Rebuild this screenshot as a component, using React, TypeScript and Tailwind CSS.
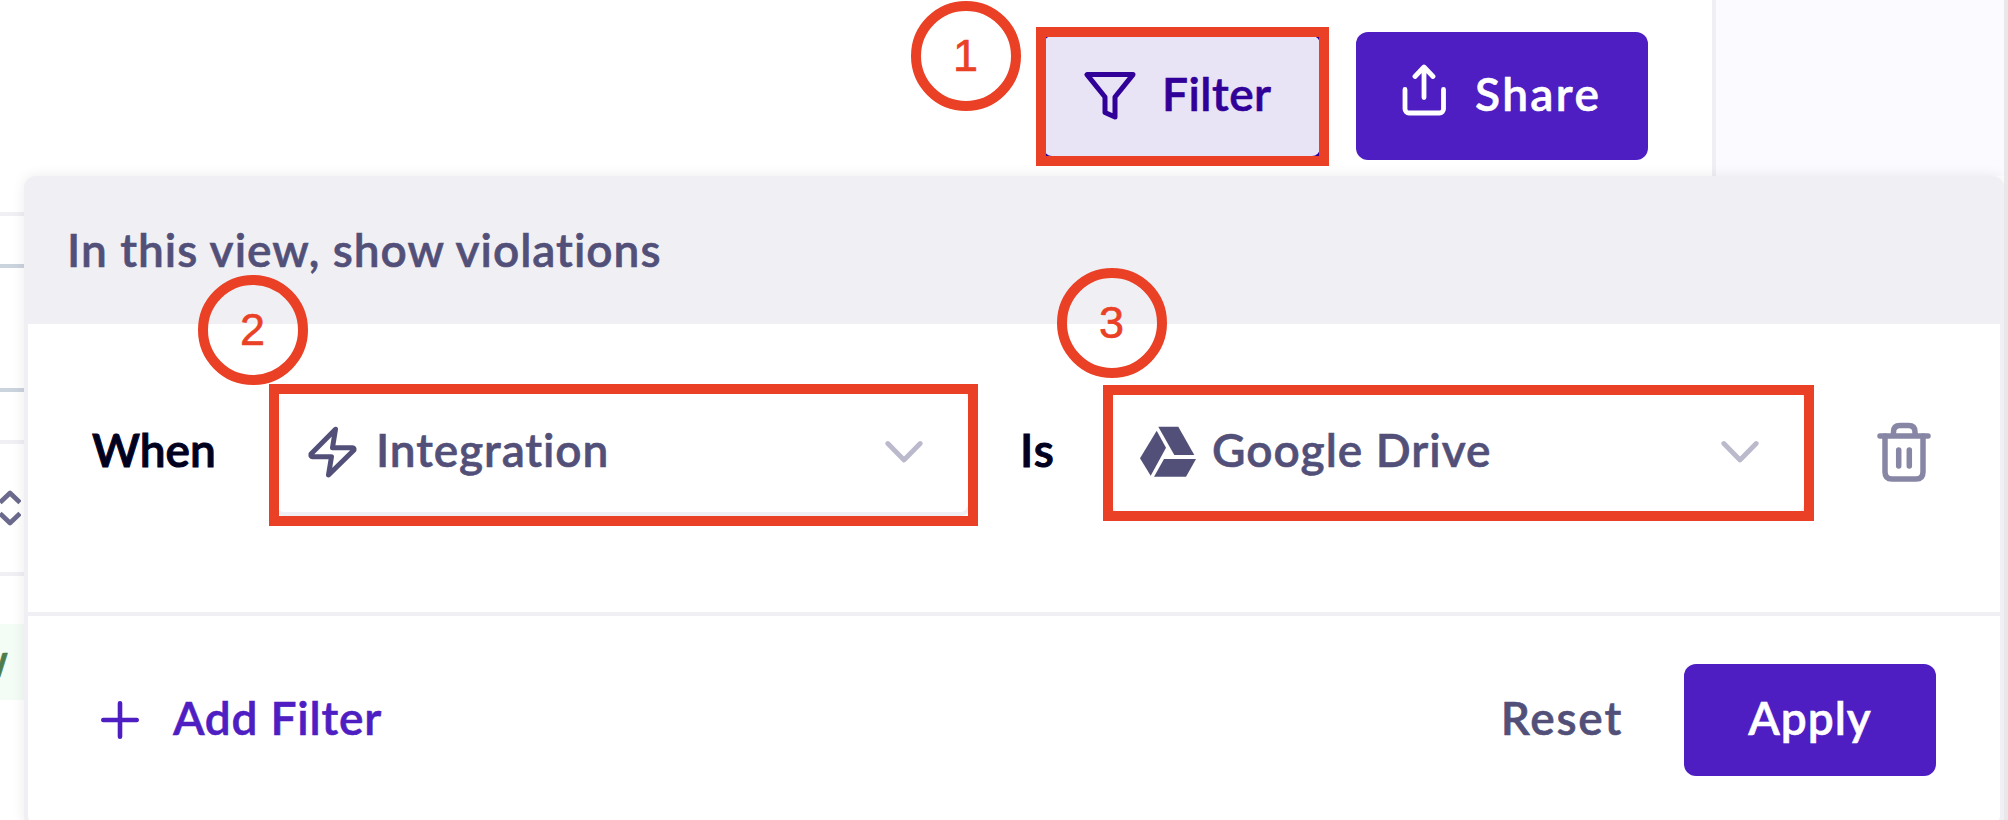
import type { ReactNode } from "react";

function FunnelIcon() {
  return (
    <svg width="52" height="48" viewBox="0 0 52 48" fill="none" stroke="currentColor" strokeWidth="5" strokeLinejoin="round">
      <path d="M3 2.6H49L31 25V45L21 40.5V25Z" />
    </svg>
  );
}

function ShareIcon() {
  return (
    <svg width="44" height="52" viewBox="0 0 44 52" fill="none" stroke="currentColor" strokeWidth="4.8" strokeLinecap="round" strokeLinejoin="round">
      <path d="M3 25.5V45a4 4 0 0 0 4 4H37.500a4 4 0 0 0 4-4V25.5" />
      <path d="M22 33.500V3.500M13 12.500L22 3L31 12.500" />
    </svg>
  );
}

function BoltIcon() {
  return (
    <svg width="49" height="53" viewBox="0 0 49 53" fill="none" stroke="currentColor" strokeWidth="5" strokeLinejoin="round">
      <path d="M27.500 3.300L3 28Q2.500 30.700 4.500 30.700H23.500L20.500 49L46 24Q46.500 21.700 44.500 21.700H24.500Z" />
    </svg>
  );
}

function DriveIcon() {
  return (
    <svg width="56" height="52" viewBox="0 0 56 52" fill="currentColor">
      <path d="M16.700 4.700L26 21.700L10.700 49.700L0 32.300Z" />
      <path d="M18.300 .7H38.300L54.300 29H34.300Z" />
      <path d="M24 33H56L46 50.700H14Z" />
    </svg>
  );
}

function ChevronIcon() {
  return (
    <svg className="text-[#bbb9cc]" width="38" height="24" viewBox="0 0 38 24" fill="none" stroke="currentColor" strokeWidth="4.8" strokeLinecap="round" strokeLinejoin="round">
      <path d="M2.800 3.500L19 20L35.200 3.500" />
    </svg>
  );
}

function TrashIcon() {
  return (
    <svg width="54" height="60" viewBox="0 0 54 60" fill="none" stroke="currentColor" strokeWidth="5.500" strokeLinecap="round" strokeLinejoin="round">
      <path d="M3 14H51" />
      <path d="M16.500 13V10Q16.500 3.600 23 3.600H31.500Q38 3.600 38 10V13" />
      <path d="M8 14V50Q8 57 15 57H39Q46 57 46 50V14" />
      <path d="M21.700 28V44M32.300 28V44" />
    </svg>
  );
}

function PlusIcon() {
  return (
    <svg width="38" height="38" viewBox="0 0 38 38" stroke="currentColor" strokeWidth="4.600" strokeLinecap="round">
      <path d="M19 2.300V35.700M2.300 19H35.700" />
    </svg>
  );
}

function SortIcon() {
  return (
    <svg className="text-[#6b698c]" width="21" height="36" viewBox="0 0 21 36" fill="none" stroke="currentColor" strokeWidth="4.800" strokeLinejoin="round">
      <path d="M0 12.500L10 3L20 12.500M0 23.500L10 33L20 23.500" />
    </svg>
  );
}

function Select({ icon, iconClass, label, labelClass }: { icon: ReactNode; iconClass: string; label: string; labelClass: string }) {
  return (
    <div className="flex h-32 w-[700px] items-center rounded-xl border-4 border-[#f0eff4] bg-white pr-[45px] text-[#525079]">
      <span className={iconClass}>{icon}</span>
      <span className={`pb-1 ${labelClass}`}>{label}</span>
      <span className="ml-auto"><ChevronIcon /></span>
    </div>
  );
}

function Step({ n, className }: { n: number; className: string }) {
  return (
    <div className={`absolute flex size-[110px] items-center justify-center rounded-full border-[10px] border-[#ea4025] pr-px pb-px font-['Liberation_Sans',sans-serif] text-[45px] font-normal text-[#ea4025] ${className}`}>
      {n}
    </div>
  );
}

export default function App() {
  return (
    <div className="relative flex h-[820px] w-[2008px] overflow-hidden bg-white font-['Lato',sans-serif] text-[46px] leading-[56px] font-semibold whitespace-nowrap [-webkit-text-stroke:0.6px] [font-variant-ligatures:none]">
      <div className="flex w-[2004px] flex-col">
        <header className="flex h-44 shrink-0">
          <div className="flex w-[1712px] items-start justify-end gap-8 pt-8 pr-16">
            <div className="flex h-32 w-[284px] items-center rounded-xl border-4 border-[#300098] bg-[#e8e3f5] pl-10 text-[#300098]">
              <FunnelIcon />
              <span className="ml-[26px] pb-1 tracking-[0.5px]">Filter</span>
            </div>
            <div className="flex h-32 w-[292px] items-center rounded-xl bg-[#4e1ec2] pl-[46px] text-white">
              <span className="pb-3"><ShareIcon /></span>
              <span className="ml-[29px] pb-1 tracking-[2.4px]">Share</span>
            </div>
          </div>
          <div className="flex-1 border-l-4 border-[#f0eff4] bg-[#fbfaff]" />
        </header>

        <div className="flex flex-1">
          <div className="flex w-6 shrink-0 flex-col">
            <div className="mt-9 h-1 bg-[#f0eff4]" />
            <div className="mt-12 h-1 bg-[#cbd3de]" />
            <div className="mt-[120px] h-1 bg-[#cbd3de]" />
            <div className="mt-12 h-1 bg-[#f0eff4]" />
            <div className="flex h-32 items-center"><SortIcon /></div>
            <div className="h-1 bg-[#f0eff4]" />
            <div className="mt-12 flex h-[76px] items-center justify-end overflow-hidden bg-[#f3fdf6] pr-4 pb-[5px] text-[#4d7d4d]">Low</div>
          </div>

          <section className="relative flex h-[652px] w-[1980px] shrink-0 flex-col rounded-xl border-x-4 border-b-4 border-[#f0eff4] bg-white shadow-[0_0_14px_rgba(0,0,0,0.08)]">
            <div className="flex h-[148px] shrink-0 items-center rounded-t-lg bg-[#f0eff4] pb-px pl-[39px] tracking-[1px] text-[#525079]">
              In this view, show violations
            </div>
            <div className="flex h-[292px] shrink-0 items-start border-b-4 border-[#f0eff4] pt-16 pl-16 text-[#02001f]">
              <span className="flex h-32 w-[180px] items-center pb-1 [-webkit-text-stroke:1px]">When</span>
              <Select icon={<BoltIcon />} iconClass="ml-8" label="Integration" labelClass="ml-[19px] tracking-[0.9px]" />
              <span className="flex h-32 w-[136px] items-center pb-1 pl-12 tracking-[1px] [-webkit-text-stroke:1px]">Is</span>
              <Select icon={<DriveIcon />} iconClass="ml-7" label="Google Drive" labelClass="ml-4 tracking-[1px]" />
              <span className="flex h-32 items-center pl-[69px] text-[#8886a5]"><TrashIcon /></span>
            </div>
            <div className="flex h-52 shrink-0 items-center pr-16 pl-[73px]">
              <span className="flex items-center text-[#4e1ec2]">
                <PlusIcon />
                <span className="ml-[34px] pb-1 tracking-[0.8px]">Add Filter</span>
              </span>
              <span className="mr-[61px] ml-auto pb-1 tracking-[1.800px] text-[#525079]">Reset</span>
              <span className="flex h-28 w-[252px] items-center justify-center rounded-xl bg-[#4e1ec2] pb-1 tracking-[1px] text-white">Apply</span>
            </div>
          </section>
        </div>
      </div>
      <div className="z-10 w-1 bg-[#e8e8e8]" />

      <div className="absolute top-[27px] left-[1036px] h-[139px] w-[293px] border-[10px] border-[#ea4025]" />
      <div className="absolute top-[384px] left-[269px] h-[142px] w-[709px] border-[10px] border-[#ea4025]" />
      <div className="absolute top-[385px] left-[1103px] h-[136px] w-[711px] border-[10px] border-[#ea4025]" />
      <Step n={1} className="top-[1px] left-[911px]" />
      <Step n={2} className="top-[275px] left-[198px]" />
      <Step n={3} className="top-[268px] left-[1057px]" />
    </div>
  );
}
